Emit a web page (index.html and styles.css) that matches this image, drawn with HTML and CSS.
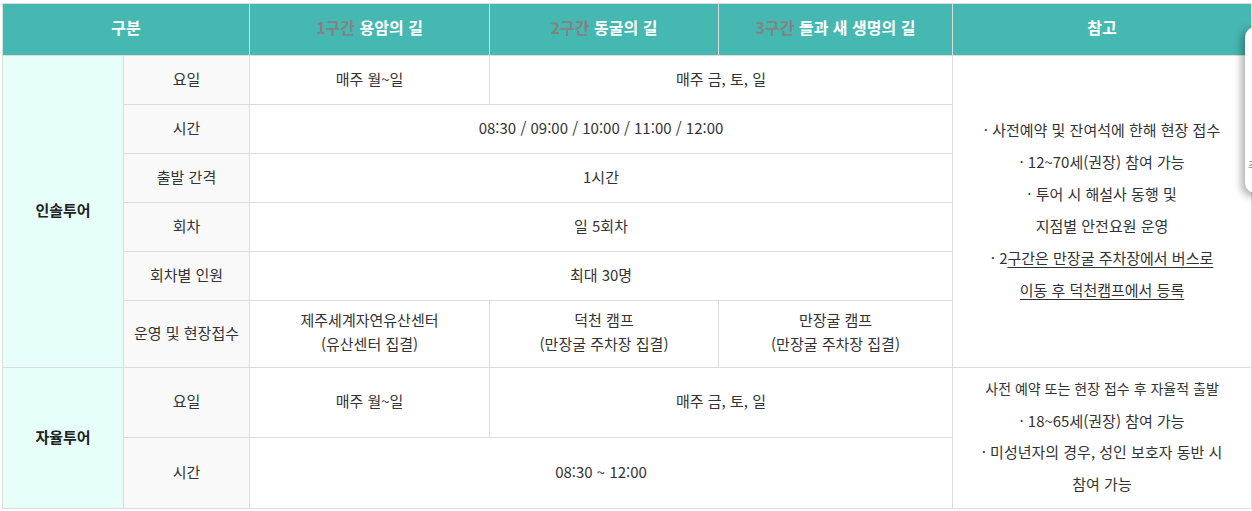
FILE: index.html
```html
<!DOCTYPE html>
<html lang="ko">
<head>
<meta charset="utf-8">
<link rel="stylesheet" href="styles.css">
</head>
<body>
<table class="tour">
  <colgroup>
    <col class="c1"><col class="c2"><col class="c3"><col class="c4"><col class="c5"><col class="c6">
  </colgroup>
  <thead>
    <tr class="head">
      <th colspan="2">구분</th>
      <th><span class="sec">1구간</span> 용암의 길</th>
      <th><span class="sec">2구간</span> 동굴의 길</th>
      <th><span class="sec">3구간</span> 돌과 새 생명의 길</th>
      <th>참고</th>
    </tr>
  </thead>
  <tbody>
    <tr class="r49">
      <td rowspan="6" class="group">인솔투어</td>
      <td class="label">요일</td>
      <td>매주 월~일</td>
      <td colspan="2">매주 금, 토, 일</td>
      <td rowspan="6" class="note">
        <p>· 사전예약 및 잔여석에 한해 현장 접수</p>
        <p>· 12~70세(권장) 참여 가능</p>
        <p>· 투어 시 해설사 동행 및</p>
        <p>지점별 안전요원 운영</p>
        <p>· 2<u>구간은 만장굴 주차장에서 버스로</u></p>
        <p><u>이동 후 덕천캠프에서 등록</u></p>
      </td>
    </tr>
    <tr class="r49">
      <td class="label">시간</td>
      <td colspan="3">08:30 / 09:00 / 10:00 / 11:00 / 12:00</td>
    </tr>
    <tr class="r49">
      <td class="label">출발 간격</td>
      <td colspan="3">1시간</td>
    </tr>
    <tr class="r49">
      <td class="label">회차</td>
      <td colspan="3">일 5회차</td>
    </tr>
    <tr class="r49">
      <td class="label">회차별 인원</td>
      <td colspan="3">최대 30명</td>
    </tr>
    <tr class="r67">
      <td class="label">운영 및 현장접수</td>
      <td class="two">제주세계자연유산센터<br>(유산센터 집결)</td>
      <td class="two">덕천 캠프<br>(만장굴 주차장 집결)</td>
      <td class="two">만장굴 캠프<br>(만장굴 주차장 집결)</td>
    </tr>
    <tr class="r70">
      <td rowspan="2" class="group">자율투어</td>
      <td class="label">요일</td>
      <td>매주 월~일</td>
      <td colspan="2">매주 금, 토, 일</td>
      <td rowspan="2" class="note note2">
        <p class="small">사전 예약 또는 현장 접수 후 자율적 출발</p>
        <p>· 18~65세(권장) 참여 가능</p>
        <p>· 미성년자의 경우, 성인 보호자 동반 시</p>
        <p>참여 가능</p>
      </td>
    </tr>
    <tr class="r71">
      <td class="label">시간</td>
      <td colspan="3">08:30 ~ 12:00</td>
    </tr>
  </tbody>
</table>
<div class="widget"><span>추</span></div>
</body>
</html>
```

FILE: styles.css
```css
html, body {
  margin: 0;
  padding: 0;
  background: #fff;
}
body {
  padding: 3px 0 0 2px;
  font-family: "Noto Sans CJK KR", sans-serif;
  color: #333;
  overflow: hidden;
}
.tour {
  border-collapse: collapse;
  table-layout: fixed;
  width: 1250px;
  font-size: 15px;
}
.c1 { width: 121px; }
.c2 { width: 126px; }
.c3 { width: 240px; }
.c4 { width: 229px; }
.c5 { width: 234px; }
.c6 { width: 299px; }
.tour th,
.tour td {
  border: 1px solid #dcdcdc;
  text-align: center;
  vertical-align: middle;
  padding: 0 0 4px;
}
.head {
  height: 52px;
  background: #45b8b1;
}
.head th {
  color: #fff;
  font-size: 16px;
  font-weight: 700;
  padding-bottom: 6px;
}
.sec {
  color: #858282;
}
.r49 { height: 49px; }
.r67 { height: 67px; }
.r70 { height: 70px; }
.r71 { height: 71px; }
.group {
  background: #e6fffb;
  font-weight: 700;
  color: #222;
}
.label {
  background: #f9f9f9;
}
.two {
  line-height: 24px;
}
.note p {
  margin: 0;
  line-height: 32px;
}
.note2 p {
  line-height: 31.5px;
}
.note p.small {
  font-size: 14px;
}
.note u {
  text-underline-offset: 3px;
}
.widget {
  position: absolute;
  left: 1245px;
  top: 27px;
  width: 60px;
  height: 166px;
  background: #fff;
  border-radius: 10px;
  box-shadow: -3px 3px 8px rgba(0, 0, 0, 0.35);
  overflow: hidden;
}
.widget span {
  position: absolute;
  left: 3px;
  top: 130px;
  font-size: 11px;
  color: #888;
}
```
